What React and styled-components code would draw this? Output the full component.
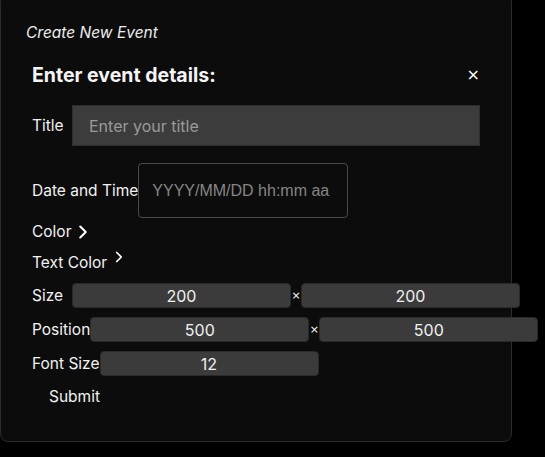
import React from "react"
import styled, { createGlobalStyle } from "styled-components"
import { ChevronRight } from "lucide-react"

const Global = createGlobalStyle`
    html, body {
        margin: 0;
        background: #000;
        font-family: Inter, "Noto Sans", sans-serif;
        color: #f2f2f2;
    }
`

const App = () => {
    return (
        <>
            <Global />
            <Panel>
                <Caption>Create New Event</Caption>
                <Header>
                    <Heading>Enter event details:</Heading>
                    <Close>×</Close>
                </Header>
                <Row $mt={15}>
                    <Label>Title</Label>
                    <TitleInput placeholder="Enter your title" />
                </Row>
                <Row $mt={17}>
                    <Label>Date and Time</Label>
                    <DateInput placeholder="YYYY/MM/DD hh:mm aa" />
                </Row>
                <Toggle $mt={4}>
                    Color
                    <ChevronRight size={22} strokeWidth={2.3} />
                </Toggle>
                <Toggle $mt={11} $raised>
                    Text Color
                    <ChevronRight size={18} strokeWidth={2.3} />
                </Toggle>
                <Row $mt={10}>
                    <Label>Size</Label>
                    <NumberInput defaultValue="200" />
                    <Times>×</Times>
                    <NumberInput defaultValue="200" />
                </Row>
                <Row $mt={9}>
                    <Label>Position</Label>
                    <NumberInput defaultValue="500" />
                    <Times>×</Times>
                    <NumberInput defaultValue="500" />
                </Row>
                <Row $mt={9}>
                    <Label>Font Size</Label>
                    <NumberInput defaultValue="12" />
                </Row>
                <Submit>Submit</Submit>
            </Panel>
        </>
    )
}

const Panel = styled.div`
    box-sizing: border-box;
    width: 512px;
    height: 448px;
    margin-top: -6px;
    padding: 28px 0 0 31px;
    background: #0c0c0c;
    border: 1px solid #2c2c2c;
    border-radius: 8px;
    display: flex;
    flex-direction: column;
`

const Caption = styled.div`
    margin-left: -6px;
    font-size: 15.5px;
    font-style: italic;
    line-height: 20px;
    color: #ececec;
`

const Header = styled.div`
    display: flex;
    align-items: center;
    justify-content: space-between;
    width: 448px;
    margin-top: 17px;
    height: 30px;
`

const Heading = styled.h2`
    margin: 0;
    font-size: 19.5px;
    font-weight: 700;
    color: #f4f4f4;
`

const Close = styled.button`
    background: none;
    border: none;
    padding: 0;
    color: #fff;
    font-family: "DejaVu Sans", sans-serif;
    font-size: 16px;
    line-height: 1;
`

const Row = styled.div`
    display: flex;
    align-items: center;
    margin-top: ${p => p.$mt}px;
    & > * {
        flex-shrink: 0;
    }
`

const Label = styled.label`
    min-width: 40px;
    font-size: 15.5px;
    font-weight: 400;
    color: #f2f2f2;
    white-space: nowrap;
`

const TitleInput = styled.input`
    box-sizing: border-box;
    width: 408px;
    height: 41px;
    padding: 0 16px;
    background: #3c3c3c;
    border: 1px solid #2e2e2e;
    color: #eee;
    font-family: Inter, sans-serif;
    font-size: 16px;
    outline: none;
    &::placeholder {
        color: #9a9a9a;
    }
`

const DateInput = styled.input`
    box-sizing: border-box;
    width: 210px;
    height: 55px;
    padding: 0 13px;
    background: transparent;
    border: 1px solid #4a4a4a;
    border-radius: 4px;
    color: #eee;
    font-family: "Liberation Sans", Arial, sans-serif;
    font-size: 16px;
    outline: none;
    &::placeholder {
        color: #858585;
    }
`

const Toggle = styled.div`
    display: flex;
    align-items: ${p => (p.$raised ? "flex-start" : "center")};
    gap: ${p => (p.$raised ? "3px" : "0")};
    margin-top: ${p => p.$mt}px;
    height: 20px;
    font-size: 15.5px;
    line-height: 20px;
    color: #f2f2f2;
    svg {
        color: #fff;
        margin-top: ${p => (p.$raised ? "-5.5px" : "0")};
    }
`

const NumberInput = styled.input`
    box-sizing: border-box;
    width: 219px;
    height: 25px;
    padding: 0;
    background: #3b3b3b;
    border: 1px solid #2a2a2a;
    border-radius: 4px;
    color: #f0f0f0;
    font-family: Inter, sans-serif;
    font-size: 16px;
    text-align: center;
    outline: none;
`

const Times = styled.span`
    width: 10px;
    text-align: center;
    font-family: "DejaVu Sans", sans-serif;
    font-size: 11px;
    color: #fff;
`

const Submit = styled.button`
    align-self: flex-start;
    margin-top: 11px;
    padding: 0 17px;
    background: none;
    border: none;
    color: #f0f0f0;
    font-family: Inter, sans-serif;
    font-size: 15.5px;
    line-height: 20px;
`

export default App
